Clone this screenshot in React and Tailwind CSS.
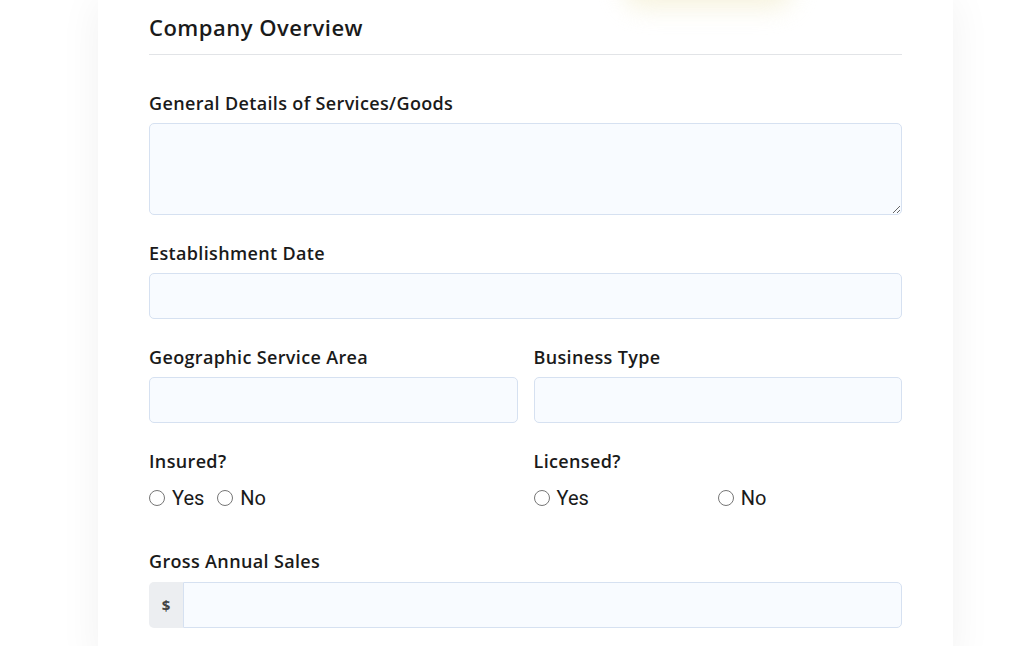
import React from 'react'

const font = { fontFamily: '"Open Sans", "Noto Sans", sans-serif' }

const Label = ({ children, className = 'mb-[11px]' }) => (
  <label className={`block text-[18px] font-semibold tracking-[0.35px] text-[#1a1a1a] leading-[18px] ${className}`}>
    {children}
  </label>
)

const inputCls =
  'block w-full h-[46px] rounded-[5px] border border-[#d6e1f1] bg-[#f8fbff] px-3 outline-none'

const Radio = ({ name, label, className = '' }) => (
  <label className={`flex items-center gap-[7px] ${className}`}>
    <input
      type="radio"
      name={name}
      className="appearance-none w-[16px] h-[16px] rounded-full border border-[#767676] bg-white m-0"
    />
    <span className="text-[20px] text-[#1a1a1a] leading-none" style={{ fontFamily: '"Roboto", sans-serif' }}>
      {label}
    </span>
  </label>
)

export default function App() {
  return (
    <div className="h-screen bg-white overflow-hidden" style={font}>
      <div className="relative w-[855px] ml-[98px] bg-white shadow-[0_0_40px_rgba(0,0,0,0.06)] pl-[51px] pr-[51px] pt-[12px] pb-10 min-h-[646px]">
        <div className="absolute left-[525px] top-[-30px] w-[170px] h-[38px] rounded-full bg-[#f3eed0] blur-[12px] opacity-70" />
        <h2 className="relative text-[22px] font-semibold tracking-[0.5px] text-[#1a1a1a] leading-[30px] pb-[12px] border-b border-[#e2e4e7]">
          Company Overview
        </h2>

        <div className="mt-[39px]">
          <Label>General Details of Services/Goods</Label>
          <textarea className="block w-full h-[92px] rounded-[5px] border border-[#d6e1f1] bg-[#f8fbff] px-3 py-2 outline-none" />
        </div>

        <div className="mt-[29px]">
          <Label>Establishment Date</Label>
          <input className={inputCls} />
        </div>

        <div className="mt-[29px] grid grid-cols-2 gap-4">
          <div>
            <Label>Geographic Service Area</Label>
            <input className={inputCls} />
          </div>
          <div>
            <Label>Business Type</Label>
            <input className={inputCls} />
          </div>
        </div>

        <div className="mt-[29px] grid grid-cols-2 gap-4">
          <div>
            <Label>Insured?</Label>
            <div className="flex items-center gap-[13px] mt-[18px]">
              <Radio name="insured" label="Yes" />
              <Radio name="insured" label="No" />
            </div>
          </div>
          <div>
            <Label>Licensed?</Label>
            <div className="grid grid-cols-2 mt-[18px]">
              <Radio name="licensed" label="Yes" />
              <Radio name="licensed" label="No" />
            </div>
          </div>
        </div>

        <div className="mt-[44px]">
          <Label className="mb-[12px]">Gross Annual Sales</Label>
          <div className="flex h-[46px]">
            <span className="flex items-center justify-center w-[34px] rounded-l-[5px] bg-[#eceef1] text-[15px] font-bold text-[#444]">
              $
            </span>
            <input className="flex-1 h-full rounded-r-[5px] border border-[#d6e1f1] bg-[#f8fbff] px-3 outline-none" />
          </div>
        </div>
      </div>
    </div>
  )
}
